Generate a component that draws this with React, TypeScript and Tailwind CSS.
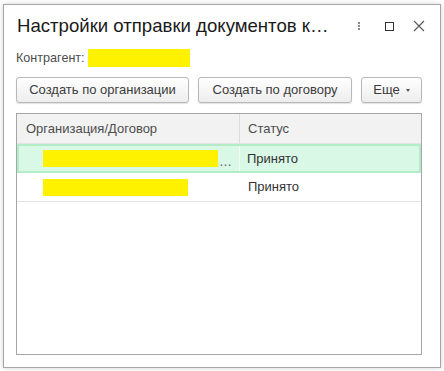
const FONT = { fontFamily: '"Liberation Sans", Arial, sans-serif' };

const rows = [
  { name: 'w-[175px]', dots: true, active: true },
  { name: 'w-[145px]', dots: false, active: false },
];

function Btn({ w, children }: { w: string; children: React.ReactNode }) {
  return (
    <button
      className={`${w} shrink-0 whitespace-nowrap h-[26px] rounded-[3px] border border-[#b8b8b8] bg-gradient-to-b from-white to-[#ededed] shadow-[0_1px_1px_rgba(0,0,0,0.12)] text-[13px] text-[#3b3b3b] flex items-center justify-center gap-[6px]`}
    >
      {children}
    </button>
  );
}

export default function App() {
  return (
    <div className="w-[444px] h-[371px] bg-white pt-[4px] pl-[3px]" style={FONT}>
      <div className="w-[438px] h-[364px] border border-[#a6a6a6] bg-white shadow-[0_0_5px_rgba(0,0,0,0.18)] flex flex-col pl-[12px] pr-[18px] pb-[12px]">
        {/* Title */}
        <div className="h-[42px] flex items-center">
          <div className="whitespace-nowrap text-[18.6px] text-[#1a1a1a] pl-[1px]">
            Настройки отправки документов к…
          </div>
          <div className="ml-auto flex items-center">
            <div className="flex flex-col gap-[1px] mr-[25px]">
              <span className="w-[2px] h-[2px] bg-[#8a8a8a]" />
              <span className="w-[2px] h-[2px] bg-[#8a8a8a]" />
              <span className="w-[2px] h-[2px] bg-[#8a8a8a]" />
            </div>
            <div className="w-[9px] h-[9px] border border-[#333] mr-[19px]" />
            <svg width="12" height="12" viewBox="0 0 12 12" className="mr-[-3px]">
              <path d="M1 1L11 11M11 1L1 11" stroke="#555" strokeWidth="1.1" />
            </svg>
          </div>
        </div>

        {/* Контрагент */}
        <div className="mt-[2px] h-[18px] flex items-center text-[12.6px] text-[#4d4d4d]">
          <span>Контрагент:</span>
          <span className="ml-[3px] w-[102px] h-[18px] bg-[#fff200]" />
        </div>

        {/* Buttons */}
        <div className="mt-[10px] flex gap-[9px]">
          <Btn w="w-[173px]">Создать по организации</Btn>
          <Btn w="w-[154px]">Создать по договору</Btn>
          <Btn w="w-[61px]">
            <span>Еще</span>
            <span className="w-0 h-0 border-l-[2.5px] border-r-[2.5px] border-t-[3px] border-l-transparent border-r-transparent border-t-[#555]" />
          </Btn>
        </div>

        {/* Table */}
        <div className="mt-[10px] flex-1 border border-[#a6a6a6] flex flex-col text-[13px]">
          <div className="h-[30px] bg-[#f2f2f2] flex text-[#4d4d4d] border-b border-[#e4e4e4]">
            <div className="w-[223px] border-r border-[#dcdcdc] flex items-center pl-[9px]">Организация/Договор</div>
            <div className="flex-1 flex items-center pl-[8px]">Статус</div>
          </div>
          {rows.map((r, i) => (
            <div
              key={i}
              className={`h-[29px] flex text-[#333] ${
                r.active
                  ? 'bg-[#d9f8e6] border-2 border-[#b2ecc9]'
                  : 'border-b border-[#e4e4e4]'
              }`}
            >
              <div
                className={`${
                  r.active ? 'w-[221px] border-r border-[#f4fcf7] pl-[24px]' : 'w-[223px] pl-[26px]'
                } flex items-center`}
              >
                <span className={`${r.name} h-[17px] bg-[#fff200]`} />
                {r.dots && <span className="ml-[1px] text-[#555] leading-none mt-[5px]">…</span>}
              </div>
              <div className={`flex-1 flex items-center ${r.active ? 'pl-[7px]' : 'pl-[8px]'}`}>Принято</div>
            </div>
          ))}
        </div>
      </div>
    </div>
  );
}
